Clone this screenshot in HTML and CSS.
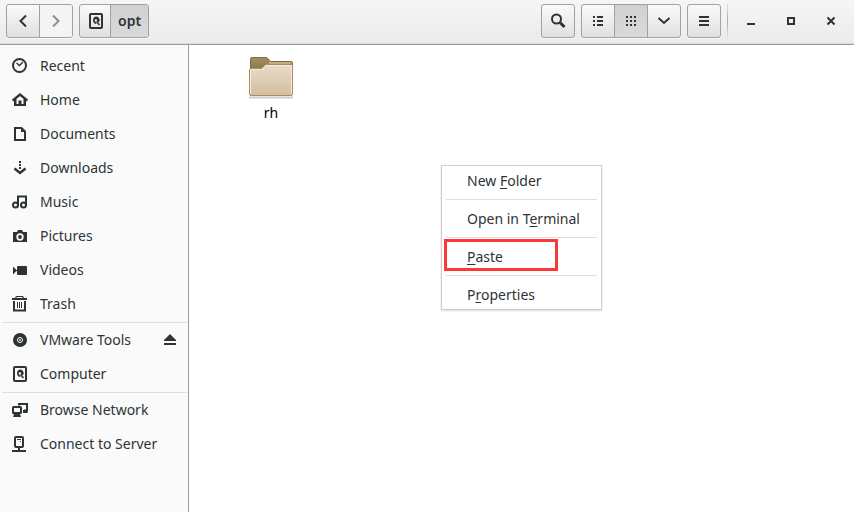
FILE: index.html
```html
<!DOCTYPE html>
<html lang="en">
<head>
<meta charset="utf-8">
<title>opt</title>
<link rel="stylesheet" href="styles.css">
</head>
<body>
<svg class="defs" width="0" height="0" aria-hidden="true">
  <symbol id="disk" viewBox="0 0 16 16">
    <rect x="2" y="1" width="12" height="14" rx="1" fill="none" stroke="currentColor" stroke-width="2"/>
    <path fill="currentColor" fill-rule="evenodd" d="M8 3.500a3.800 3.800 0 0 1 3.700 4.500L10 9.500 9 8.500 9 7A1.200 1.200 0 1 0 7.500 8.500L8.500 11A3.800 3.800 0 0 1 8 3.500z"/>
    <path d="M8.500 8.500l3 3.500" fill="none" stroke="currentColor" stroke-width="1.500"/>
  </symbol>
</svg>
<header class="titlebar">
  <div class="group" role="group" aria-label="History">
    <button class="btn" aria-label="Back"><svg class="icon" viewBox="0 0 16 16"><path class="line" d="M11 2.500 5.500 8l5.500 5.500"/></svg></button>
    <button class="btn off" aria-label="Forward" disabled><svg class="icon" viewBox="0 0 16 16"><path class="line" d="M5 2.500l5.500 5.500-5.500 5.500"/></svg></button>
  </div>
  <nav class="group" aria-label="Path">
    <button class="btn root" aria-label="Computer"><svg class="icon"><use href="#disk"/></svg></button>
    <button class="btn crumb pressed">opt</button>
  </nav>
  <div class="spacer"></div>
  <div class="group">
    <button class="btn" aria-label="Search"><svg class="icon" viewBox="0 0 16 16"><circle class="line" cx="6.500" cy="6" r="4.500"/><path class="line thick" d="M10 9.500l4.500 4.500"/></svg></button>
  </div>
  <div class="group" role="group" aria-label="View">
    <button class="btn" aria-label="List view"><svg class="icon" viewBox="0 0 16 16"><path fill="currentColor" d="M3 3h2v2H3zM7 3h6v2H7zM3 7h2v2H3zM7 7h6v2H7zM3 11h2v2H3zM7 11h6v2H7z"/></svg></button>
    <button class="btn pressed" aria-label="Icon view"><svg class="icon" viewBox="0 0 16 16"><path fill="currentColor" d="M3 3h2v2H3zM7 3h2v2H7zM11 3h2v2h-2zM3 7h2v2H3zM7 7h2v2H7zM11 7h2v2h-2zM3 11h2v2H3zM7 11h2v2H7zM11 11h2v2h-2z"/></svg></button>
    <button class="btn" aria-label="View options"><svg class="icon" viewBox="0 0 16 16"><path class="line" d="M2.500 5 8 10l5.500-5"/></svg></button>
  </div>
  <div class="group">
    <button class="btn" aria-label="Menu"><svg class="icon" viewBox="0 0 16 16"><path fill="currentColor" d="M3 3h10v2H3zM3 7h10v2H3zM3 11h10v2H3z"/></svg></button>
  </div>
  <div class="window-buttons">
    <button class="win" aria-label="Minimize"><svg class="icon" viewBox="0 0 16 16"><path fill="currentColor" d="M4 10h8v2H4z"/></svg></button>
    <button class="win" aria-label="Maximize"><svg class="icon" viewBox="0 0 16 16"><path class="line" d="M5 5h6v6H5z"/></svg></button>
    <button class="win" aria-label="Close"><svg class="icon" viewBox="0 0 16 16"><path class="line" d="M4.500 4.500l7 7M11.500 4.500l-7 7"/></svg></button>
  </div>
</header>
<div class="body">
  <nav class="sidebar" aria-label="Places">
    <a class="place" href="#recent"><svg class="icon" viewBox="0 0 16 16"><circle class="line" cx="7.500" cy="7.500" r="6.500"/><path d="M4.500 5l3 2.500 3.500-3.500" fill="none" stroke="currentColor" stroke-width="1.300"/></svg>Recent</a>
    <a class="place" href="#home"><svg class="icon" viewBox="0 0 16 16"><path d="M.6 8.500 8 2.500l7.400 6" fill="none" stroke="currentColor" stroke-width="2.400"/><path fill="currentColor" d="M2 7h2.500v5h2V8.500h3V12h2V7H14v7H2z"/></svg>Home</a>
    <a class="place" href="#documents"><svg class="icon" viewBox="0 0 16 16"><path class="line" d="M3 2h6.500L13 5.500V14H3z"/><path fill="currentColor" d="M9 2v4h4z"/></svg>Documents</a>
    <a class="place" href="#downloads"><svg class="icon" viewBox="0 0 16 16"><path fill="currentColor" d="M7 1h2v2H7zM7 4h2v2H7zM7 7h2v2H7z"/><path d="M2.500 8.500 8 13l5.500-4.500" fill="none" stroke="currentColor" stroke-width="2.400"/></svg>Downloads</a>
    <a class="place" href="#music"><svg class="icon" viewBox="0 0 16 16"><path class="line" d="M6 11.500V2.500h8v9"/><circle class="line" cx="3.500" cy="11" r="2.500"/><circle class="line" cx="11.500" cy="11" r="2.500"/></svg>Music</a>
    <a class="place" href="#pictures"><svg class="icon" viewBox="0 0 16 16"><path fill="currentColor" d="M1 4h4l1-2h4l1 2h4v10H1z"/><circle cx="8" cy="9" r="2.800" fill="none" stroke="#fafafa" stroke-width="1.800"/></svg>Pictures</a>
    <a class="place" href="#videos"><svg class="icon" viewBox="0 0 16 16"><path fill="currentColor" d="M1 4.500l4 4-4 4zM4 8h2v1H4z"/><rect x="5" y="4" width="10" height="9" rx="1" fill="currentColor"/></svg>Videos</a>
    <a class="place" href="#trash"><svg class="icon" viewBox="0 0 16 16"><path fill="currentColor" d="M0 2h3l1-2h7l1 2h3v2H0zM5 6h1v6H5zM7 6h1v6H7zM9 6h1v6H9z"/><path fill="#fafafa" d="M4.500 1h6v1h-6z"/><path class="line" d="M2 5v9.500h11V5"/></svg>Trash</a>
    <hr class="rule">
    <a class="place" href="#vmware"><svg class="icon" viewBox="0 0 16 16"><circle cx="8" cy="8" r="7" fill="currentColor"/><circle cx="8" cy="8" r="2.500" fill="none" stroke="#fafafa"/><circle cx="8" cy="8" r="1" fill="#d0d0d0"/></svg>VMware Tools<svg class="icon eject" viewBox="0 0 16 16"><path fill="currentColor" d="M8 2l6 6v1H2V8zM2 11h12v2H2z"/></svg></a>
    <a class="place" href="#computer"><svg class="icon"><use href="#disk"/></svg>Computer</a>
    <hr class="rule">
    <a class="place" href="#network"><svg class="icon" viewBox="0 0 16 16"><path class="line" d="M7 3.500V2h8v6.500h-3"/><rect class="line" x="1" y="5" width="8" height="6" rx=".6"/><path fill="currentColor" d="M2 12h6l1 3H1zM11 8h4v1l1 2h-5z"/></svg>Browse Network</a>
    <a class="place" href="#server"><svg class="icon" viewBox="0 0 16 16"><rect class="line" x="3" y="1" width="8" height="10" rx="1"/><path fill="currentColor" d="M5 3h4v1H5zM8 5h1v1H8zM6 12h2v2H6zM0 14h14v2H0z"/></svg>Connect to Server</a>
  </nav>
  <main class="files">
    <figure class="file">
      <svg class="folder" viewBox="0 0 48 42" aria-hidden="true">
        <defs>
          <linearGradient id="front" x2="0" y2="1"><stop offset="0" stop-color="#eadccb"/><stop offset="1" stop-color="#d3bda0"/></linearGradient>
          <linearGradient id="back" x2="0" y2="1"><stop offset="0" stop-color="#a58d63"/><stop offset="1" stop-color="#8a724a"/></linearGradient>
        </defs>
        <path d="M2 40.500h44" stroke="#b9b9b9" stroke-width="2" opacity=".7"/>
        <path d="M3.500 14V1.500q0-1 1-1H19q1 0 1.500.6L23.500 4.500H44q1.500 0 1.500 1.500V14z" fill="url(#back)" stroke="#866b40"/>
        <path d="M22 6h22.500" stroke="#c4ac82" stroke-width="2"/>
        <path d="M2.500 37V13q0-1.500 1.500-1.500H14.500L18 8q.5-.5 1.500-.5H44.500q1 0 1 1V37q0 1.500-1.500 1.500H4q-1.500 0-1.500-1.500z" fill="url(#front)" stroke="#a88c62"/>
        <path d="M3.500 37V12.500H15L18.500 9q.5-.5 1-.5h25V37" fill="none" stroke="#f5ece0"/>
      </svg>
      <figcaption>rh</figcaption>
    </figure>
  </main>
</div>
<div class="menu" role="menu">
  <button class="item" role="menuitem">New <u>F</u>older</button>
  <hr class="divider">
  <button class="item" role="menuitem">Open in T<u>e</u>rminal</button>
  <hr class="divider">
  <button class="item marked" role="menuitem"><u>P</u>aste</button>
  <hr class="divider">
  <button class="item" role="menuitem">P<u>r</u>operties</button>
</div>
</body>
</html>
```
FILE: styles.css
```css
*, *::after { box-sizing: border-box; }
body {
  margin: 0;
  min-height: 100vh;
  display: flex;
  flex-direction: column;
  background: #fff;
  color: #2e3436;
  font: 14px/20px "Noto Sans", "Open Sans", sans-serif;
}
button { font: inherit; color: inherit; margin: 0; padding: 0; border: 0; background: none; }
hr { border: 0; height: 1px; background: #dedede; }
.defs { position: absolute; }
.icon { width: 16px; height: 16px; flex: none; display: block; }
.line { fill: none; stroke: currentColor; stroke-width: 2; }
.thick { stroke-width: 3; }

.titlebar {
  display: flex;
  align-items: flex-start;
  gap: 6px;
  padding: 4px 3px 6px 6px;
  background: linear-gradient(#f6f6f6, #ebebeb);
  border-bottom: 1px solid #999b9b;
  box-shadow: inset 0 -1px #dcdcdc;
}
.group {
  display: flex;
  height: 34px;
  border: 1px solid #a1a1a1;
  border-radius: 3px;
  background: linear-gradient(#fafafa, #e0e0e0);
  box-shadow: 0 1px #fbfbfb;
  overflow: hidden;
}
.btn { width: 32px; display: flex; align-items: center; justify-content: center; }
.btn + .btn { width: 33px; border-left: 1px solid #a1a1a1; }
.btn.off { color: #8e9192; background: #f4f4f4; }
.btn.pressed { background: linear-gradient(#d0d0d0, #dadada); }
.btn.root { width: 30px; padding-left: 2px; }
.btn + .btn.crumb { width: auto; padding: 0 7px; font-weight: 600; }
.spacer { flex: 1; }
.window-buttons {
  display: flex;
  height: 34px;
  border-left: 1px solid;
  border-image: linear-gradient(#e6e6e6, #a8a8a8 50%, #e6e6e6) 1;
  padding-left: 3px;
}
.win { width: 40px; display: flex; align-items: center; justify-content: center; }

.body { flex: 1; display: flex; }
.sidebar {
  width: 189px;
  flex: none;
  padding-top: 4px;
  background: #fafafa;
  border-right: 1px solid #999b9b;
}
.place {
  display: flex;
  align-items: center;
  gap: 12px;
  height: 34px;
  padding: 0 10px 0 12px;
  color: inherit;
  text-decoration: none;
}
.eject { margin-left: auto; }
.rule { margin: 1px 1px 0 2px; }
.files { flex: 1; padding: 12px 0 0 58px; }
.file { width: 48px; margin: 0; text-align: center; color: #000; }
.folder { display: block; width: 48px; height: 42px; }
figcaption { padding-top: 4px; }

.menu {
  position: absolute;
  left: 441px;
  top: 165px;
  width: 161px;
  padding-top: 1px;
  background: #fff;
  border: 1px solid #cfcfcf;
  box-shadow: 0 1px 2px rgba(0, 0, 0, .15);
}
.item { display: block; position: relative; width: 100%; height: 28px; padding-left: 25px; text-align: left; }
.item u { text-underline-offset: 2px; text-decoration-thickness: 1px; }
.divider { margin: 4px 4px 5px; }
.marked::after {
  content: "";
  position: absolute;
  left: 2px;
  top: -4px;
  width: 114px;
  height: 32px;
  border: 3px solid #fa3838;
}
```
